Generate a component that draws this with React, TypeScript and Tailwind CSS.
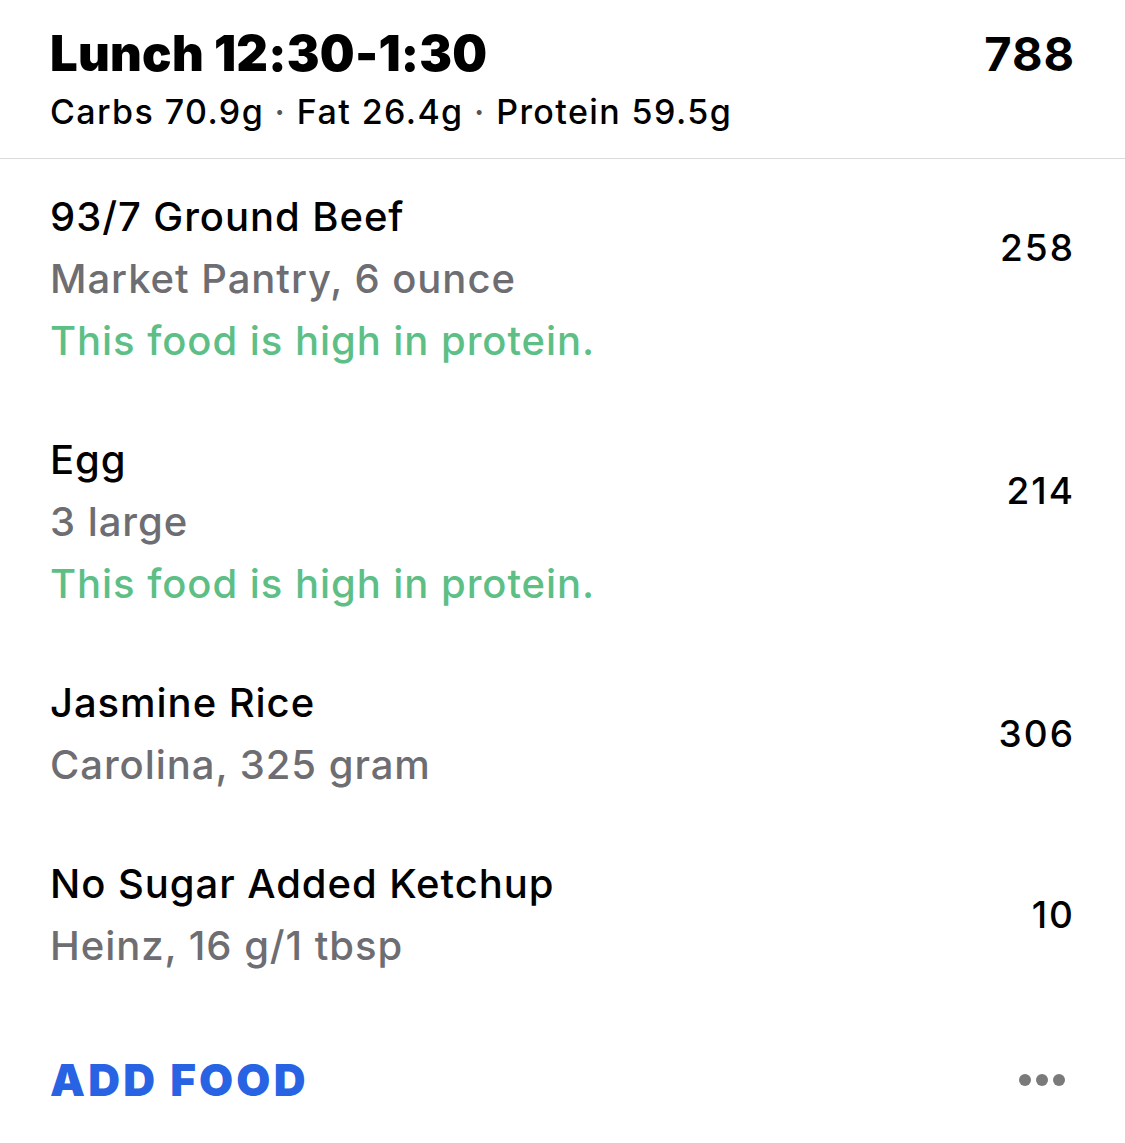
import React from "react";

type Food = {
  name: string;
  detail: string;
  calories: number;
  note?: string;
};

const foods: Food[] = [
  {
    name: "93/7 Ground Beef",
    detail: "Market Pantry, 6 ounce",
    calories: 258,
    note: "This food is high in protein.",
  },
  {
    name: "Egg",
    detail: "3 large",
    calories: 214,
    note: "This food is high in protein.",
  },
  {
    name: "Jasmine Rice",
    detail: "Carolina, 325 gram",
    calories: 306,
  },
  {
    name: "No Sugar Added Ketchup",
    detail: "Heinz, 16 g/1 tbsp",
    calories: 10,
  },
];

function FoodRow({ food }: { food: Food }) {
  return (
    <div className="px-[50px] pt-[27px] pb-[30px]">
      <div className="flex items-center justify-between">
        <div className="flex flex-col">
          <div className="text-[40px] leading-[62px] font-medium tracking-[0.95px] text-black">
            {food.name}
          </div>
          <div className="text-[40px] leading-[62px] font-medium tracking-[0.95px] text-[#6d6d72]">
            {food.detail}
          </div>
        </div>
        <div className="text-[37px] leading-[40px] font-medium tracking-[2px] text-black">
          {food.calories}
        </div>
      </div>
      {food.note && (
        <div className="text-[40px] leading-[62px] font-medium tracking-[0.95px] text-[#5dbf86]">
          {food.note}
        </div>
      )}
    </div>
  );
}

export default function App() {
  return (
    <div className="min-h-[1143px] w-[1125px] bg-white font-['Inter',sans-serif] antialiased">
      {/* Meal header */}
      <div className="px-[50px] pt-[28px] pb-[26px]">
        <div className="flex items-start justify-between">
          <div className="text-[49px] leading-[52px] font-black tracking-[0.005em] text-black">
            Lunch 12:30-1:30
          </div>
          <div className="text-[47px] leading-[52px] font-bold tracking-[0.02em] text-black">
            788
          </div>
        </div>
        <div className="mt-[12px] text-[34px] leading-[40px] font-medium tracking-[1.4px] text-black">
          Carbs 70.9g <span className="text-[#555]">·</span> Fat 26.4g{" "}
          <span className="text-[#555]">·</span> Protein 59.5g
        </div>
      </div>
      <div className="h-px bg-[#dadada]" />

      {/* Logged foods */}
      {foods.map((f) => (
        <FoodRow key={f.name} food={f} />
      ))}

      {/* Footer actions */}
      <div className="mt-[47px] flex items-center justify-between px-[50px]">
        <button className="text-[44px] leading-[52px] font-black tracking-[3.2px] text-[#2863e3]">
          ADD FOOD
        </button>
        <div className="mr-[10px] flex items-center gap-[5px]">
          <span className="h-[12px] w-[12px] rounded-full bg-[#7a7a7a]" />
          <span className="h-[12px] w-[12px] rounded-full bg-[#7a7a7a]" />
          <span className="h-[12px] w-[12px] rounded-full bg-[#7a7a7a]" />
        </div>
      </div>
    </div>
  );
}
